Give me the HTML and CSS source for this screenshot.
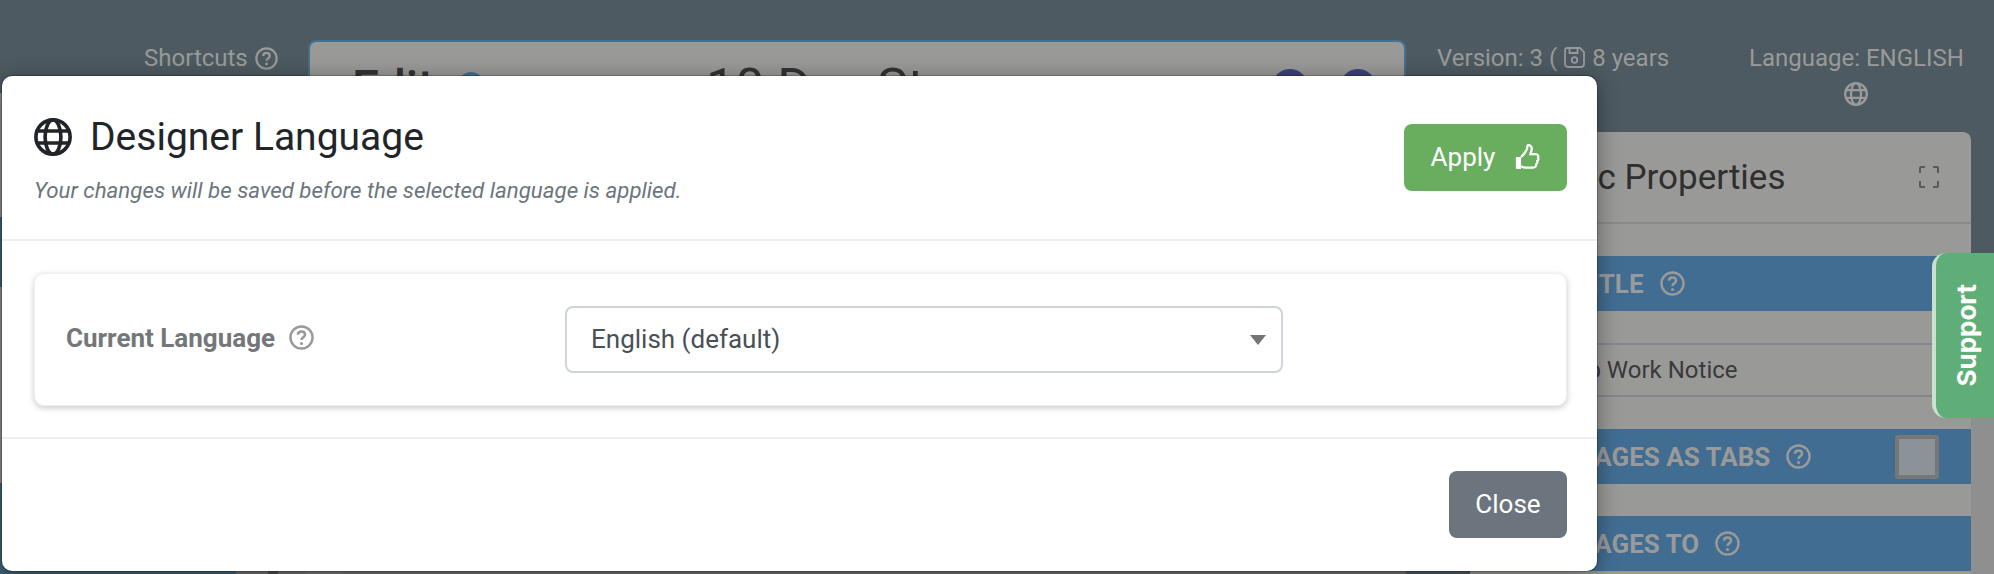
FILE: index.html
```html
<!DOCTYPE html>
<html lang="en">

<head>
    <meta charset="UTF-8">
    <title>Designer Language</title>
    <link rel="stylesheet" href="styles.css">
</head>

<body>
    <svg class="defs" width="0" height="0">
        <symbol id="help" viewBox="0 0 24 24">
            <circle cx="12" cy="12" r="10.6" fill="none" stroke="currentColor" stroke-width="2.3"></circle>
            <path d="M8.6 9.4c0-2 1.5-3.2 3.400-3.200s3.400 1.200 3.400 3c0 2.600-3.400 2.600-3.400 5.200" fill="none" stroke="currentColor" stroke-width="2.400"></path>
            <circle cx="12" cy="17.800" r="1.500" fill="currentColor"></circle>
        </symbol>
        <symbol id="globe" viewBox="0 0 24 24">
            <g fill="none" stroke="currentColor" stroke-width="2.3">
                <circle cx="12" cy="12" r="10.800"></circle>
                <ellipse cx="12" cy="12" rx="5" ry="10.800"></ellipse>
                <path d="M2.200 8.200h19.600M2.200 15.800h19.600"></path>
            </g>
        </symbol>
    </svg>

    <div class="page">
        <div class="left-area">
            <div class="left-top">
                <div class="col-side">
                    <div class="shortcuts">Shortcuts <svg class="help-sm"><use href="#help"></use></svg></div>
                    <div class="sidebar">
                        <div class="side-band top"></div>
                        <div class="side-gap"></div>
                        <div class="side-band low"></div>
                    </div>
                </div>
                <div class="form-card">
                    <div class="form-head">
                        <div class="form-edit">Edit
                            <svg class="edit-icon" viewBox="0 0 26 26"><circle cx="13" cy="13" r="13"></circle></svg>
                        </div>
                        <div class="form-name">10 Day Stop<br>Work Notice</div>
                        <div class="avatars">
                            <span class="avatar"></span>
                            <span class="avatar"></span>
                        </div>
                    </div>
                </div>
            </div>
            <div class="strip">
                <span class="strip-blue"></span>
                <span class="strip-a"></span>
                <span class="strip-b"></span>
                <span class="strip-c"></span>
                <span class="strip-d"></span>
            </div>
        </div>

        <div class="right-area">
            <div class="meta">
                <div class="version">Version: 3 (
                    <svg class="save-icon" viewBox="0 0 21 21">
                        <g fill="none" stroke="currentColor" stroke-width="1.800">
                            <path d="M3 1h13l4 4v12a3 3 0 0 1-3 3H4a3 3 0 0 1-3-3V3a2 2 0 0 1 2-2z"></path>
                            <path d="M5.500 1v5h8V1"></path>
                            <circle cx="10.500" cy="13" r="2.800"></circle>
                        </g>
                    </svg>
                    8 years
                </div>
                <div class="language">Language: ENGLISH
                    <svg class="meta-globe"><use href="#globe"></use></svg>
                </div>
            </div>

            <div class="panel">
                <div class="panel-head">
                    <h2>Basic Properties</h2>
                    <svg class="expand" viewBox="0 0 20 22">
                        <path d="M1 7V2a1 1 0 0 1 1-1h4M14 1h4a1 1 0 0 1 1 1v5M19 15v5a1 1 0 0 1-1 1h-4M6 21H2a1 1 0 0 1-1-1v-5" fill="none" stroke="currentColor" stroke-width="2"></path>
                    </svg>
                </div>
                <div class="band first">FORM TITLE <svg class="help-band"><use href="#help"></use></svg></div>
                <div class="field">10 Day Stop Work Notice</div>
                <div class="band">SHOW PAGES AS TABS <svg class="help-band"><use href="#help"></use></svg>
                    <span class="check"></span>
                </div>
                <div class="band second">SHOW PAGES TO <svg class="help-band"><use href="#help"></use></svg></div>
            </div>
        </div>

        <div class="gutter"></div>
    </div>

    <div class="support"><span>Support</span></div>

    <section class="modal">
        <header class="modal-head">
            <div>
                <h1><svg class="title-globe"><use href="#globe"></use></svg>Designer Language</h1>
                <p class="note">Your changes will be saved before the selected language is applied.</p>
            </div>
            <button class="btn apply">Apply
                <svg class="thumb" viewBox="0 0 24 26">
                    <path d="M0.800 12.500h5v11.500h-4a1 1 0 0 1-1-1z" fill="currentColor"></path>
                    <path d="M5.800 12.500c2-1.800 4.600-5 5.600-7.500.5-1.500.3-3 .9-3.700 2-.6 4 1 3.800 3.700-.1 1.700-.9 3.200-1.300 4.700h5.200c1.800 0 2.800 1.700 2.200 3.300.6 1.300.2 2.600-.8 3.300.4 1.400-.1 2.600-1.100 3.200.2 1.700-.8 3.300-2.900 3.300H10c-1.800 0-3-.7-4.200-1.300" fill="none" stroke="currentColor" stroke-width="2.200"></path>
                </svg>
            </button>
        </header>

        <div class="modal-body">
            <div class="lang-card">
                <div class="lang-label">Current Language <svg class="help-label"><use href="#help"></use></svg></div>
                <div class="select-wrap">
                    <select class="lang-select">
                        <option>English (default)</option>
                    </select>
                </div>
            </div>
        </div>

        <footer class="modal-foot">
            <button class="btn close">Close</button>
        </footer>
    </section>
</body>

</html>
```

FILE: styles.css
```css
* {
    box-sizing: border-box;
}

html,
body {
    margin: 0;
    height: 574px;
    overflow: hidden;
}

body {
    background-color: #4d5a61;
    font-family: Roboto, sans-serif;
}

.defs {
    display: block;
}

.page {
    display: flex;
    height: 574px;
}

/* dimmed page behind the modal */
.left-area {
    width: 1406px;
    display: flex;
    flex-direction: column;
}

.left-top {
    flex: 1;
    display: flex;
    min-height: 0;
}

.col-side {
    width: 308px;
    display: flex;
    flex-direction: column;
}

.shortcuts {
    display: flex;
    align-items: center;
    gap: 7px;
    height: 36px;
    margin-top: 40px;
    padding-left: 144px;
    color: #999a99;
    font-size: 24px;
    white-space: nowrap;
}

.help-sm {
    width: 23px;
    height: 23px;
    flex: none;
}

.sidebar {
    flex: 1;
    width: 236px;
    margin-top: 17px;
    display: flex;
    flex-direction: column;
    background-color: #8f8f8f;
}

.side-band {
    background-color: #3f6078;
}

.side-band.top {
    height: 70px;
    margin-top: 124px;
}

.side-gap {
    flex: 1;
}

.side-band.low {
    height: 88px;
}

.form-card {
    width: 1098px;
    margin-top: 40px;
    background-color: #999998;
    border: 2px solid #44708f;
    border-bottom: 0;
    border-radius: 8px 8px 0 0;
    overflow: hidden;
}

.form-head {
    display: flex;
    align-items: flex-start;
    padding: 18px 28px 0 42px;
    color: #333;
    font-size: 48px;
    font-weight: 500;
    line-height: 56px;
}

.form-edit {
    width: 354px;
    display: flex;
    gap: 24px;
}

.edit-icon {
    width: 26px;
    height: 26px;
    margin-top: 12px;
    fill: #44708f;
}

.form-name {
    flex: 1;
    font-size: 52px;
    font-weight: 400;
}

.avatars {
    display: flex;
    gap: 32px;
    margin-top: 9px;
}

.avatar {
    width: 36px;
    height: 36px;
    border-radius: 50%;
    background-color: #3e437a;
}

.strip {
    height: 3px;
    display: flex;
    background-color: #717171;
}

.strip span {
    display: block;
}

.strip-blue {
    width: 236px;
    background-color: #3f6078;
}

.strip-a {
    width: 32px;
}

.strip-b {
    width: 10px;
    background-color: #4f4f4f;
}

.strip-c {
    width: 29px;
}

.strip-d {
    width: 35px;
    background-color: #787878;
}

.right-area {
    flex: 1;
    display: flex;
    flex-direction: column;
    min-width: 0;
}

.meta {
    height: 132px;
    padding: 40px 8px 0 31px;
    display: flex;
    justify-content: space-between;
    color: #999a99;
    font-size: 24px;
}

.version {
    display: flex;
    align-items: flex-start;
    gap: 7px;
    line-height: 36px;
    white-space: nowrap;
}

.save-icon {
    width: 21px;
    height: 21px;
    margin-top: 7px;
}

.language {
    width: 214px;
    line-height: 36px;
    text-align: center;
    white-space: nowrap;
}

.meta-globe {
    display: block;
    width: 24px;
    height: 24px;
    margin: 6px auto 0;
}

.panel {
    flex: 1;
    margin-left: 64px;
    background-color: #999998;
    border-radius: 8px 8px 0 0;
    overflow: hidden;
}

.panel-head {
    height: 92px;
    padding: 0 32px 0 60px;
    display: flex;
    align-items: center;
    justify-content: space-between;
    border-bottom: 2px solid #8b8b8a;
    color: #2f2f2f;
}

.panel-head h2 {
    margin: 0;
    font-size: 35px;
    font-weight: 400;
}

.expand {
    width: 20px;
    height: 22px;
    color: #5a5a5a;
}

.band {
    height: 55px;
    padding-left: 28px;
    display: flex;
    align-items: center;
    gap: 10px;
    background-color: #426d92;
    color: #999a99;
    font-size: 26px;
    font-weight: 700;
}

.band.first {
    margin-top: 32px;
}

.band.second {
    margin-top: 32px;
}

.help-band {
    width: 25px;
    height: 25px;
    margin-left: 6px;
}

.check {
    margin-left: auto;
    margin-right: 32px;
    width: 44px;
    height: 44px;
    border: 4px solid #777;
    border-radius: 3px;
    background-color: #8b9298;
}

.field {
    height: 54px;
    margin: 32px 0;
    padding: 0 3px;
    display: flex;
    align-items: center;
    border-top: 2px solid #858590;
    border-bottom: 2px solid #858590;
    color: #3a3a3a;
    font-size: 24px;
    white-space: nowrap;
}

.gutter {
    width: 23px;
    margin-top: 300px;
    background-color: #8f8f8f;
}

/* support tab */
.support {
    position: absolute;
    top: 253px;
    left: 1932px;
    width: 62px;
    height: 165px;
    padding-left: 2px;
    display: flex;
    align-items: center;
    justify-content: center;
    background-color: #5fae78;
    border-left: 4px solid #c8e2d1;
    border-radius: 14px 0 0 14px;
}

.support span {
    writing-mode: vertical-rl;
    transform: rotate(180deg);
    color: #fff;
    font-family: Inter, sans-serif;
    font-size: 26px;
    font-weight: 700;
}

/* modal */
.modal {
    position: absolute;
    top: 76px;
    left: 2px;
    width: 1595px;
    height: 495px;
    display: flex;
    flex-direction: column;
    background-color: #fff;
    border-radius: 10px;
    box-shadow: 0 0 0 1px rgba(0, 0, 0, 0.2), 0 4px 22px rgba(0, 0, 0, 0.4);
}

.modal-head {
    height: 165px;
    padding: 39px 30px 0 32px;
    display: flex;
    justify-content: space-between;
    align-items: flex-start;
    border-bottom: 2px solid #eceef3;
}

.modal-head h1 {
    margin: 0;
    display: flex;
    align-items: center;
    gap: 18px;
    color: #212529;
    font-size: 39px;
    font-weight: 400;
    line-height: 44px;
}

.title-globe {
    width: 38px;
    height: 38px;
}

.note {
    margin: 18px 0 0;
    color: #6c757d;
    font-size: 22.3px;
    font-style: italic;
}

.btn {
    border: 0;
    border-radius: 8px;
    padding-bottom: 2px;
    color: #fff;
    font-family: Roboto, sans-serif;
    font-size: 26px;
    height: 67px;
}

.apply {
    width: 163px;
    margin-top: 9px;
    display: flex;
    align-items: center;
    justify-content: center;
    gap: 20px;
    background-color: #69ae5f;
}

.thumb {
    width: 25px;
    height: 27px;
}

.close {
    width: 118px;
    background-color: #6c757d;
}

.modal-body {
    height: 198px;
    padding: 32px 30px 0 32px;
    border-bottom: 2px solid #eceef3;
}

.lang-card {
    height: 133px;
    padding: 0 31px;
    display: flex;
    align-items: center;
    background-color: #fff;
    border: 1px solid #f0f0f2;
    border-radius: 10px;
    box-shadow: 0 2px 6px rgba(0, 0, 0, 0.22);
}

.lang-label {
    width: 499px;
    margin-bottom: 4px;
    display: flex;
    align-items: center;
    gap: 14px;
    color: #74777a;
    font-size: 26px;
    font-weight: 700;
}

.help-label {
    width: 25px;
    height: 25px;
    color: #999;
}

.select-wrap {
    position: relative;
    width: 718px;
}

.select-wrap::after {
    content: "";
    position: absolute;
    top: 29px;
    right: 17px;
    border-left: 8px solid transparent;
    border-right: 8px solid transparent;
    border-top: 10px solid #757575;
}

.lang-select {
    display: block;
    width: 100%;
    height: 67px;
    padding: 0 24px 2px;
    appearance: none;
    background-color: #fff;
    border: 2px solid #ced4da;
    border-radius: 8px;
    color: #495057;
    font-family: Roboto, sans-serif;
    font-size: 26px;
}

.modal-foot {
    flex: 1;
    padding: 32px 30px 0 0;
    display: flex;
    justify-content: flex-end;
    align-items: flex-start;
}
```
